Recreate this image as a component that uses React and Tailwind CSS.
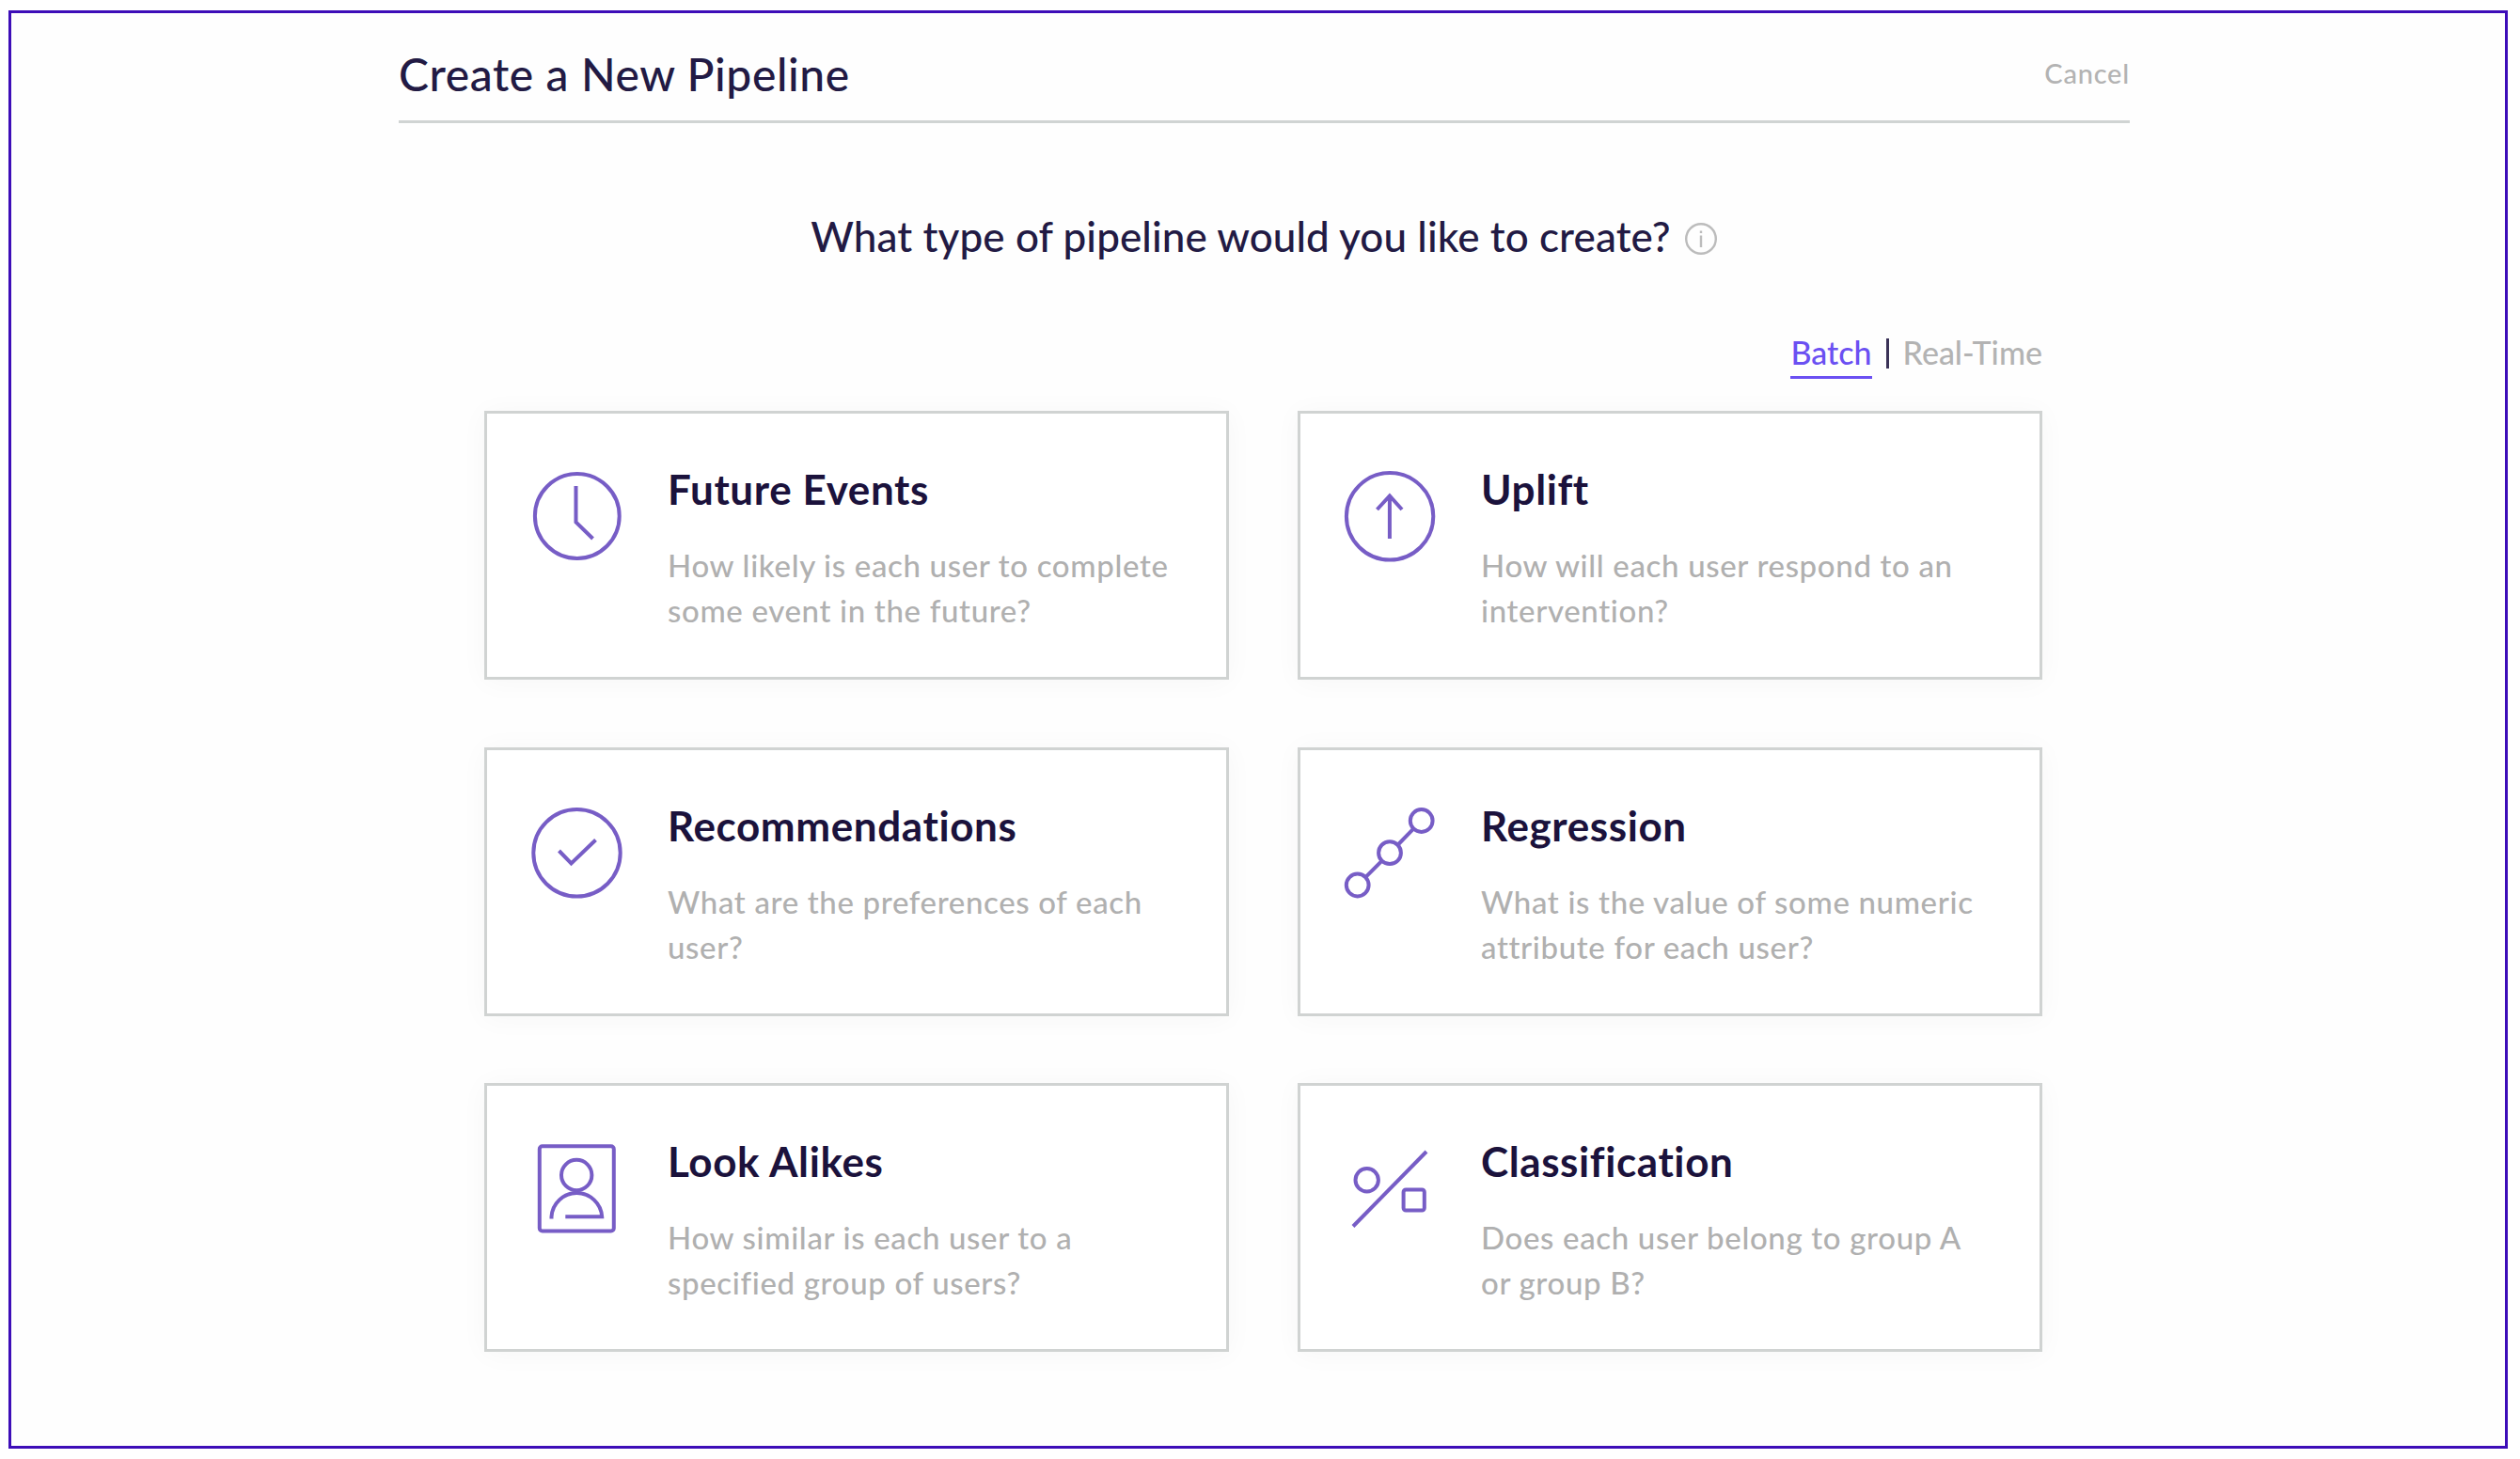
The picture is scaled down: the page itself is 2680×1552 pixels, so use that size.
const ClockIcon = () => (
    <>
        <circle cx="49.8" cy="50" r="44.9" />
        <path d="M48.5 18V56.5L66.5 74" />
    </>
);

const ArrowIcon = () => (
    <>
        <circle cx="49.1" cy="50.3" r="46.2" />
        <path d="M48.9 74V28.5M35.5 43L48.9 28.5L62 43" />
    </>
);

const CheckIcon = () => (
    <>
        <circle cx="49.5" cy="50.3" r="46.2" />
        <path d="M30.5 48L43.5 61.5L69.5 36.5" />
    </>
);

const RegressionIcon = () => (
    <>
        <circle cx="82.7" cy="16" r="11.9" />
        <circle cx="49" cy="50.2" r="11.9" />
        <circle cx="14.7" cy="84.5" r="11.9" />
        <path d="M74.4 24.3L57.3 42M40.7 58.6L23 76.3" />
    </>
);

const PersonIcon = () => (
    <>
        <rect x="9.8" y="5.2" width="79" height="90.2" rx="3" />
        <circle cx="49.2" cy="36" r="16.2" />
        <path d="M22.5 82.5V80.3A26.9 26.9 0 0 1 76.2 80.3H37.3" />
    </>
);

const PercentIcon = () => (
    <>
        <circle cx="24.7" cy="41.3" r="12.2" />
        <path d="M10 90.5L88 11" />
        <rect x="63.6" y="51.5" width="22.2" height="22" rx="2.5" />
    </>
);

const pipelineTypes = [
    {
        name: "Future Events",
        description: "How likely is each user to complete some event in the future?",
        Icon: ClockIcon,
    },
    {
        name: "Uplift",
        description: "How will each user respond to an intervention?",
        Icon: ArrowIcon,
    },
    {
        name: "Recommendations",
        description: "What are the preferences of each user?",
        Icon: CheckIcon,
    },
    {
        name: "Regression",
        description: "What is the value of some numeric attribute for each user?",
        Icon: RegressionIcon,
    },
    {
        name: "Look Alikes",
        description: "How similar is each user to a specified group of users?",
        Icon: PersonIcon,
    },
    {
        name: "Classification",
        description: "Does each user belong to group A or group B?",
        Icon: PercentIcon,
    },
];

const PipelineCard = ({ type }) => {
    const { name, description, Icon } = type;
    return (
        <button className="flex h-[286px] items-start gap-[46px] border-3 border-[#d0d3d2] bg-white pt-[52px] pr-[54px] pl-[46px] text-left shadow-[0_2px_28px_rgba(0,0,0,0.035)]">
            <svg
                viewBox="0 0 100 100"
                className="mt-[7px] size-[100px] shrink-0 fill-none stroke-[#775dc6] stroke-[4]">
                <Icon />
            </svg>
            <div>
                <h3 className="text-[44px] leading-[56px] font-bold tracking-[0.6px] text-[#1b123c]">{name}</h3>
                <p className="mt-[29px] text-[33px] leading-[48px] font-medium tracking-[0.65px] text-[#b0b0b0]">
                    {description}
                </p>
            </div>
        </button>
    );
};

const App = () => {
    return (
        <div className="h-[1552px] w-[2680px] bg-white pt-[11px] pl-[9px] font-['Lato','Open_Sans',sans-serif]">
            <div className="h-[1530px] w-[2658px] border-3 border-[#3d0db8] bg-[#fefefe] pl-[412px]">
                <div className="w-[1841px]">
                    <div className="flex items-center justify-between border-b-3 border-[#d0d4d3] pt-[35px] pb-[19px]">
                        <h1 className="text-[48px] leading-[60px] font-medium tracking-[0.6px] text-[#221a44]">
                            Create a New Pipeline
                        </h1>
                        <button className="-mt-[3px] text-[29px] leading-[60px] font-medium tracking-[0.8px] text-[#b3b3b3]">
                            Cancel
                        </button>
                    </div>

                    <div className="mt-[90px] flex items-center justify-center gap-[14px]">
                        <h2 className="text-[44px] leading-[60px] font-medium tracking-[0.09px] text-[#221a44]">
                            What type of pipeline would you like to create?
                        </h2>
                        <svg
                            viewBox="0 0 36 36"
                            className="mt-1.5 size-9 fill-none stroke-[#bcbcbc] stroke-[2.4]">
                            <circle cx="18" cy="18" r="15.8" />
                            <path d="M18 14.5V27M18 9.5V12" />
                        </svg>
                    </div>

                    <div className="mt-[72px] pr-[93px] pl-[91px]">
                        <div className="flex justify-end gap-[15px] text-[34px] leading-[44px] font-medium">
                            <button className="border-b-3 border-[#6b50f2] pb-[3px] text-[#6b50f2]">Batch</button>
                            <span className="mt-[7px] h-8 w-[3px] bg-[#3a3257]" />
                            <button className="self-start text-[#b3b3b3]">Real-Time</button>
                        </div>

                        <div className="mt-[34px] grid grid-cols-2 gap-x-[73px] gap-y-[71.5px]">
                            {pipelineTypes.map((type) => (
                                <PipelineCard key={type.name} type={type} />
                            ))}
                        </div>
                    </div>
                </div>
            </div>
        </div>
    );
};

export default App;
